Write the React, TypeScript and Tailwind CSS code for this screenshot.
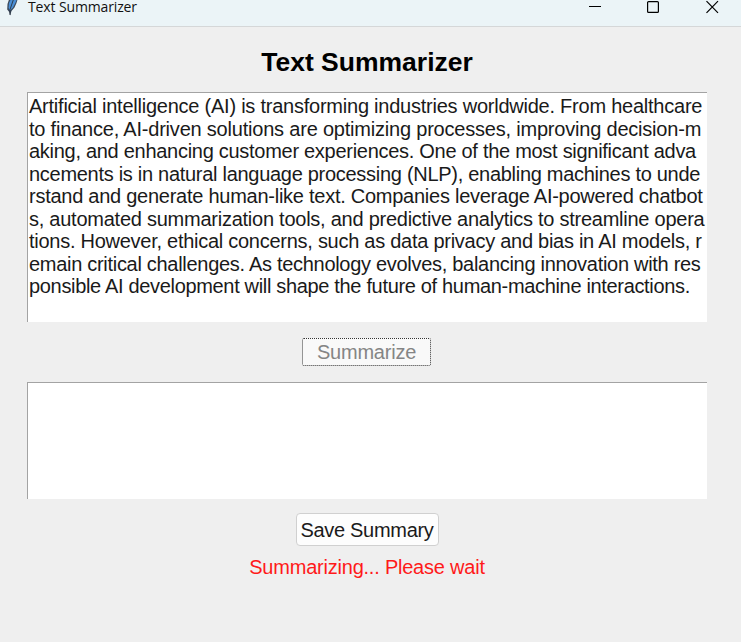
const lines: { text: string; tracking: string }[] = [
  { text: 'Artificial intelligence (AI) is transforming industries worldwide. From healthcare', tracking: 'tracking-[-0.235px]' },
  { text: 'to finance, AI-driven solutions are optimizing processes, improving decision-m', tracking: 'tracking-[-0.205px]' },
  { text: 'aking, and enhancing customer experiences. One of the most significant adva', tracking: 'tracking-[-0.283px]' },
  { text: 'ncements is in natural language processing (NLP), enabling machines to unde', tracking: 'tracking-[-0.287px]' },
  { text: 'rstand and generate human-like text. Companies leverage AI-powered chatbot', tracking: 'tracking-[-0.257px]' },
  { text: 's, automated summarization tools, and predictive analytics to streamline opera', tracking: 'tracking-[-0.248px]' },
  { text: 'tions. However, ethical concerns, such as data privacy and bias in AI models, r', tracking: 'tracking-[-0.266px]' },
  { text: 'emain critical challenges. As technology evolves, balancing innovation with res', tracking: 'tracking-[-0.295px]' },
  { text: 'ponsible AI development will shape the future of human-machine interactions.', tracking: 'tracking-[-0.329px]' },
];

function Feather() {
  return (
    <svg width="14" height="17" viewBox="0 0 14 17" className="ml-[5px] shrink-0">
      <path d="M4.5 -2 L13 -2 L11.5 3 L9.5 7.5 L6.5 11 L5.2 15.5 L4.2 12 L2.2 9.5 L2.5 4 Z" fill="#3b4a5c" />
      <path d="M6 -1 L12 -1 L10.3 3 L8 7.5 L5 10.5 L3.6 8 L4 3 Z" fill="#4a8fd6" />
      <path d="M8.6 -1 L5 9.5 L5 15" stroke="#28323e" strokeWidth="0.9" fill="none" />
    </svg>
  );
}

function TitleBar() {
  return (
    <header className="flex h-[27px] shrink-0 border-b border-[#d5d7d8] bg-[#ebf4f7]">
      <Feather />
      <h1 className="ml-[9px] whitespace-nowrap font-['Open_Sans',sans-serif] text-[14px] leading-[14px] tracking-[-0.13px] text-[#111]">
        Text Summarizer
      </h1>
      <svg width="140" height="16" viewBox="0 0 140 16" className="ml-auto mr-[13px] shrink-0" fill="none" stroke="#000">
        <path d="M1 6.5 H13" />
        <rect x="59.6" y="1.6" width="10.8" height="10.8" rx="1" strokeWidth="1.2" />
        <path d="M118.5 1.2 L130 12.8 M130 1.2 L118.5 12.8" strokeWidth="1.2" />
      </svg>
    </header>
  );
}

export default function App() {
  return (
    <div className="flex h-[642px] w-[741px] flex-col overflow-hidden bg-[#efefef] font-['Liberation_Sans',Arial,sans-serif] text-[20px]">
      <TitleBar />
      <main className="flex w-[734px] flex-col items-center">
        <h2 className="mt-[20px] whitespace-nowrap text-[26.5px] font-bold leading-[30px] text-black">Text Summarizer</h2>
        <div className="mt-[15px] h-[230px] w-[680px] border-l border-t border-[#a3a3a3] bg-white pl-[1px] pt-[2px] text-[#1a1a1a]">
          {lines.map((line) => (
            <p key={line.text} className={`w-max whitespace-pre leading-[22.5px] ${line.tracking}`}>
              {line.text}
            </p>
          ))}
        </div>
        <button className="mr-[1px] mt-[16px] flex h-[28px] w-[129px] items-center justify-center rounded-[2px] border border-dotted border-[#333] bg-[#f9f9f9] tracking-[-0.22px] text-[#858585]">
          Summarize
        </button>
        <div className="mt-[16px] h-[117px] w-[680px] border-l border-t border-[#a3a3a3] bg-white" />
        <button className="mt-[14px] flex h-[33px] w-[143px] items-center justify-center whitespace-nowrap rounded-[4px] border border-[#d0d0d0] bg-[#fdfdfd] tracking-[-0.3px] text-[#1a1a1a]">
          Save Summary
        </button>
        <p className="mt-[10px] whitespace-nowrap leading-[23px] tracking-[-0.22px] text-[#ff1a1a]">Summarizing... Please wait</p>
      </main>
    </div>
  );
}
